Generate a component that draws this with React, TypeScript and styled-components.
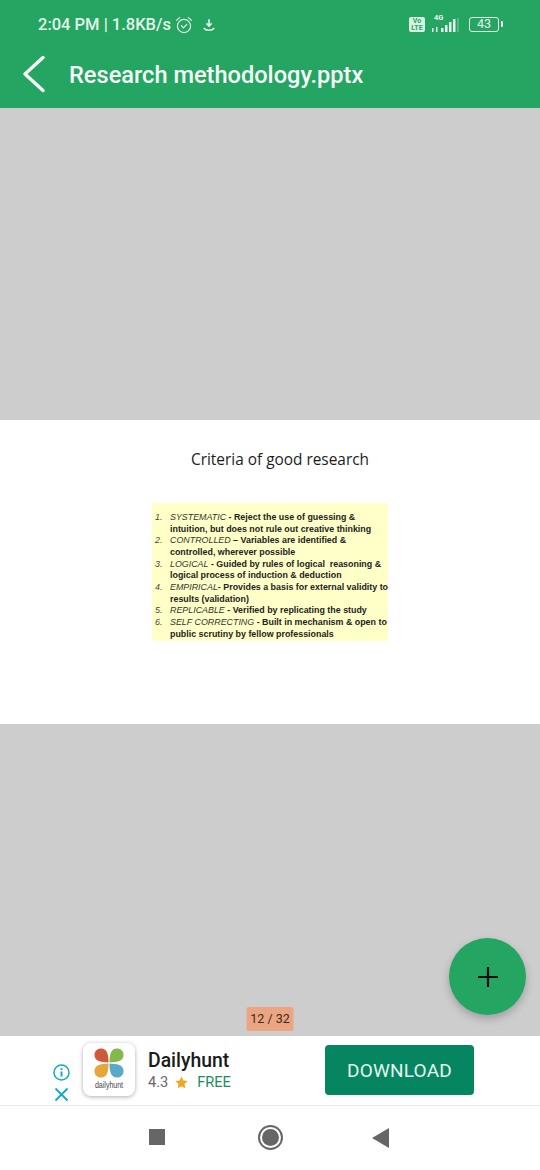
import * as React from "react";
import styled, { createGlobalStyle } from "styled-components";

const GlobalStyle = createGlobalStyle`
  html, body {
    margin: 0;
    padding: 0;
    background: #fff;
  }
  * {
    box-sizing: border-box;
  }
`;

const Screen = styled.div`
  width: 540px;
  height: 1170px;
  display: flex;
  flex-direction: column;
  overflow: hidden;
  font-family: Roboto, "Liberation Sans", sans-serif;
`;

const Header = styled.header`
  height: 108px;
  flex: none;
  background: #24a562;
  color: #f1faf5;
  display: flex;
  flex-direction: column;
`;

const StatusBar = styled.div`
  height: 48px;
  padding: 1px 41px 0 38px;
  display: flex;
  align-items: center;
  justify-content: space-between;
`;

const StatusLeft = styled.div`
  display: flex;
  align-items: center;
  font-size: 16.5px;
  font-weight: 500;
  color: #e4f4eb;
`;

const StatusRight = styled.div`
  display: flex;
  align-items: center;
`;

const VoLte = styled.div`
  width: 16px;
  height: 15px;
  background: #d8f0e2;
  color: #24a562;
  border-radius: 2px;
  font-size: 7px;
  line-height: 7px;
  font-weight: 700;
  text-align: center;
  padding-top: 1px;
`;

const Network = styled.div`
  position: relative;
  width: 28px;
  height: 20px;
  margin: 0 0 2px 7px;
`;

const NetworkLabel = styled.span`
  position: absolute;
  top: -1px;
  left: 2px;
  font-size: 7.5px;
  font-weight: 700;
  color: #e4f4eb;
`;

const Battery = styled.div`
  width: 30px;
  height: 15px;
  margin-left: 9px;
  border: 1.5px solid #e4f4eb;
  border-radius: 3px;
  font-size: 12.5px;
  line-height: 12px;
  text-align: center;
  color: #e4f4eb;
  position: relative;

  &::after {
    content: "";
    position: absolute;
    right: -5px;
    top: 3px;
    width: 2px;
    height: 6px;
    background: #e4f4eb;
    border-radius: 0 1px 1px 0;
  }
`;

const TitleRow = styled.div`
  height: 52px;
  padding-left: 22px;
  display: flex;
  align-items: center;
`;

const Title = styled.h1`
  margin: 2px 0 0 22px;
  font-size: 23.6px;
  font-weight: 500;
  color: #f7fcf9;
`;

const Viewer = styled.main`
  position: relative;
  flex: 1;
  background: #cdcdcd;
  display: flex;
  flex-direction: column;
  justify-content: center;
`;

const Slide = styled.section`
  height: 304px;
  background: #fff;
  display: flex;
  flex-direction: column;
  align-items: center;
`;

const SlideTitle = styled.h2`
  margin: 29px 0 0 20px;
  font-family: "Open Sans", "Liberation Sans", sans-serif;
  font-size: 15.4px;
  line-height: 22px;
  font-weight: 400;
  color: #1c1c1c;
`;

const CriteriaList = styled.ol`
  width: 236px;
  height: 138px;
  margin: 32px 0 0 0;
  padding: 9px 0 0 18px;
  list-style: none;
  background: #ffffc8;
  font-family: "Liberation Sans", Arial, sans-serif;
  font-size: 8.9px;
  line-height: 11.65px;
  font-weight: 700;
  color: #222;
`;

const CriteriaItem = styled.li`
  position: relative;
  white-space: pre;
`;

const ItemNumber = styled.span`
  position: absolute;
  left: -15px;
  top: 0;
  font-weight: 400;
  font-style: italic;
  color: #444;
`;

const Term = styled.em`
  font-weight: 400;
  color: #333;
`;

const PageBadge = styled.div`
  position: absolute;
  left: 50%;
  bottom: 5px;
  width: 47px;
  height: 24px;
  transform: translateX(-50%);
  border-radius: 2px;
  background: #eca583;
  color: #3c2a20;
  font-size: 12.5px;
  line-height: 24px;
  text-align: center;
`;

const Fab = styled.button`
  position: absolute;
  right: 14px;
  bottom: 21px;
  width: 77px;
  height: 77px;
  border: 0;
  padding: 0;
  border-radius: 50%;
  background: #24a562;
  box-shadow: 0 4px 8px rgba(0, 0, 0, 0.22);
  display: flex;
  align-items: center;
  justify-content: center;
`;

const AdBar = styled.aside`
  height: 70px;
  flex: none;
  background: #fff;
  border-bottom: 1px solid #e9e9e9;
  display: flex;
  align-items: flex-start;
`;

const AdControls = styled.div`
  width: 30px;
  height: 40px;
  margin: 28px 0 0 46px;
  display: flex;
  flex-direction: column;
  align-items: center;
  gap: 6px;
  color: #13a9c4;
`;

const AppIcon = styled.div`
  width: 52px;
  height: 53px;
  margin: 7px 0 0 7px;
  border-radius: 8px;
  background: #fff;
  box-shadow: 0 1px 4px rgba(0, 0, 0, 0.32);
  display: flex;
  flex-direction: column;
  align-items: center;
  padding-top: 5px;
`;

const AppIconLabel = styled.span`
  font-family: "Liberation Sans", sans-serif;
  font-size: 9px;
  line-height: 10px;
  transform: scaleX(0.78);
  color: #444;
  margin-top: 2px;
`;

const AppInfo = styled.div`
  margin: 13px 0 0 13px;
  width: 177px;
`;

const AppName = styled.div`
  font-size: 19.4px;
  line-height: 24px;
  font-weight: 500;
  color: #1a1a1a;
`;

const AppMeta = styled.div`
  display: flex;
  align-items: center;
  font-size: 14.6px;
  line-height: 20px;
  color: #666;
  margin-top: -1px;
`;

const Free = styled.span`
  color: #1c8b63;
  margin-left: 9px;
`;

const StarIcon = styled.svg`
  margin-left: 7px;
`;

const DownloadButton = styled.button`
  width: 149px;
  height: 50px;
  margin: 9px 0 0 0;
  border: 0;
  border-radius: 4px;
  background: #058560;
  color: #e6f5ef;
  font-family: inherit;
  font-size: 19px;
  letter-spacing: 0.2px;
`;

const NavBar = styled.nav`
  height: 64px;
  flex: none;
  background: #fff;
  display: flex;
  align-items: flex-start;
  padding: 23px 0 0 149px;
`;

const NavSquare = styled.div`
  width: 16px;
  height: 16px;
  background: #666;
`;

const NavHome = styled.div`
  width: 25px;
  height: 25px;
  margin: -4px 0 0 93px;
  border: 2px solid #666;
  border-radius: 50%;
  padding: 2px;

  &::before {
    content: "";
    display: block;
    height: 100%;
    border-radius: 50%;
    background: #666;
  }
`;

const NavBack = styled.svg`
  margin: -1px 0 0 89px;
`;

type Criterion = { term: string; lines: [string, string?] };

const criteria: Criterion[] = [
  { term: "SYSTEMATIC", lines: [" - Reject the use of guessing &", "intuition, but does not rule out creative thinking"] },
  { term: "CONTROLLED", lines: [" – Variables are identified &", "controlled, wherever possible"] },
  { term: "LOGICAL", lines: [" - Guided by rules of logical  reasoning &", "logical process of induction & deduction"] },
  { term: "EMPIRICAL", lines: ["- Provides a basis for external validity to", "results (validation)"] },
  { term: "REPLICABLE", lines: [" - Verified by replicating the study"] },
  { term: "SELF CORRECTING", lines: [" - Built in mechanism & open to", "public scrutiny by fellow professionals"] },
];

const App = () => (
  <Screen>
    <GlobalStyle />
    <Header>
      <StatusBar>
        <StatusLeft>
          2:04 PM | 1.8KB/s
          <svg width="20" height="20" viewBox="0 0 20 20" fill="none" stroke="#e4f4eb" strokeWidth="1.2" style={{ marginLeft: 3 }}>
            <circle cx="10" cy="11" r="6.6" />
            <path d="M7.4 10.6l2 2.2 3.4-3.4M2.600 5.200l3-2.600M17.400 5.200l-3-2.600" strokeLinecap="round" />
          </svg>
          <svg width="14" height="14" viewBox="0 0 16 16" fill="none" stroke="#e4f4eb" strokeWidth="1.8" style={{ marginLeft: 8 }}>
            <path d="M8 1.500v7M5 6.200l3 3 3-3M2 11.500c1.500 2 3.500 2.500 6 2.500s4.500-.5 6-2.500" />
          </svg>
        </StatusLeft>
        <StatusRight>
          <VoLte>
            Vo
            <br />
            LTE
          </VoLte>
          <Network>
            <NetworkLabel>4G</NetworkLabel>
            <svg width="28" height="20" viewBox="0 0 28 20" fill="#e4f4eb">
              <rect x="0" y="14" width="1.500" height="4" />
              <rect x="4" y="13" width="1.500" height="5" />
              <rect x="9" y="14" width="2.500" height="4" />
              <rect x="13" y="11" width="2.500" height="7" />
              <rect x="17" y="8" width="2.500" height="10" />
              <rect x="21" y="5" width="2.500" height="13" />
              <rect x="25.500" y="4" width="1" height="14" opacity="0.5" />
            </svg>
          </Network>
          <Battery>43</Battery>
        </StatusRight>
      </StatusBar>
      <TitleRow>
        <svg width="25" height="38" viewBox="0 0 25 38" fill="none" stroke="#f7fcf9" strokeWidth="3.400" strokeLinecap="round" strokeLinejoin="round">
          <path d="M21 2.500L3 19l18 16.500" />
        </svg>
        <Title>Research methodology.pptx</Title>
      </TitleRow>
    </Header>
    <Viewer>
      <Slide>
        <SlideTitle>Criteria of good research</SlideTitle>
        <CriteriaList>
          {criteria.map((item, index) => (
            <CriteriaItem key={item.term}>
              <ItemNumber>{index + 1}.</ItemNumber>
              <Term>{item.term}</Term>
              {item.lines[0]}
              {item.lines[1] && (
                <>
                  <br />
                  {item.lines[1]}
                </>
              )}
            </CriteriaItem>
          ))}
        </CriteriaList>
      </Slide>
      <PageBadge>12 / 32</PageBadge>
      <Fab aria-label="Add">
        <svg width="20" height="20" viewBox="0 0 20 20" stroke="#0d0d0d" strokeWidth="2.200">
          <path d="M10 0v20M0 10h20" />
        </svg>
      </Fab>
    </Viewer>
    <AdBar>
      <AdControls>
        <svg width="17" height="17" viewBox="0 0 17 17" fill="none" stroke="currentColor" strokeWidth="1.500">
          <circle cx="8.500" cy="8.500" r="7.500" />
          <path d="M8.500 7.500v5M8.500 4.200v1.800" strokeWidth="2" />
        </svg>
        <svg width="15" height="15" viewBox="0 0 15 15" fill="none" stroke="currentColor" strokeWidth="1.800">
          <path d="M1.500 1.500l12 12M13.500 1.500l-12 12" />
        </svg>
      </AdControls>
      <AppIcon>
        <svg width="30" height="30" viewBox="0 0 32 32">
          <path d="M15.500 15.500C8 15 0.500 14.500 0.500 7.500 0.500 3 3.500 0.500 7.500 0.500 14.500 0.500 15.500 8 15.500 15.500z" fill="#cf5a3a" />
          <path d="M16.500 15.500C24 15 31.500 14.500 31.500 7.500 31.500 3 28.500 0.500 24.500 0.500 17.500 0.500 16.500 8 16.500 15.500z" fill="#83b84c" />
          <path d="M15.500 16.500C8 17 0.500 17.500 0.500 24.500 0.500 29 3.500 31.500 7.500 31.500 14.500 31.500 15.500 24 15.500 16.500z" fill="#e5a63a" />
          <path d="M16.500 16.500C24 17 31.500 17.500 31.500 24.500 31.500 29 28.500 31.500 24.500 31.500 17.500 31.500 16.500 24 16.500 16.500z" fill="#5ba9c9" />
        </svg>
        <AppIconLabel>dailyhunt</AppIconLabel>
      </AppIcon>
      <AppInfo>
        <AppName>Dailyhunt</AppName>
        <AppMeta>
          4.3
          <StarIcon width="13" height="13" viewBox="0 0 24 24" fill="#f2a51f">
            <path d="M12 1l3.400 7.300 7.900 1-5.800 5.500 1.500 7.900-7-3.900-7 3.900 1.500-7.900L.7 9.300l7.900-1z" />
          </StarIcon>
          <Free>FREE</Free>
        </AppMeta>
      </AppInfo>
      <DownloadButton>DOWNLOAD</DownloadButton>
    </AdBar>
    <NavBar>
      <NavSquare />
      <NavHome />
      <NavBack width="17" height="20" viewBox="0 0 17 20" fill="#666">
        <path d="M17 0v20L0 10z" />
      </NavBack>
    </NavBar>
  </Screen>
);

export default App;
